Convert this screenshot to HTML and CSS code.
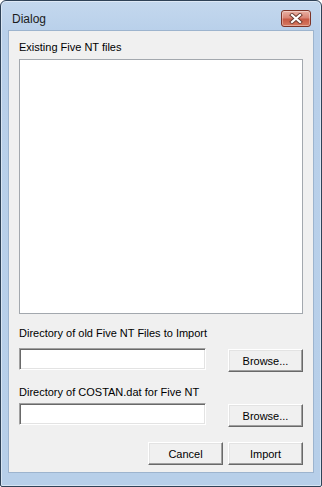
FILE: index.html
```html
<!DOCTYPE html>
<html lang="en">
<head>
    <meta charset="UTF-8">
    <meta name="viewport" content="width=device-width, initial-scale=1.0">
    <title>Dialog</title>
    <link rel="stylesheet" href="styles.css">
</head>
<body>

<div class="window">
    <div class="titlebar">
        <span class="title">Dialog</span>
        <button class="close" title="Close">
            <svg width="14" height="11" viewBox="0 0 14 11">
                <path d="M3 2 L11 9 M11 2 L3 9" stroke="#6b3a30" stroke-width="4" stroke-linecap="square"/>
                <path d="M3 2 L11 9 M11 2 L3 9" stroke="#ffffff" stroke-width="2.2" stroke-linecap="square"/>
            </svg>
        </button>
    </div>

    <div class="client">
        <div class="label label-top">Existing Five NT files</div>
        <div class="listbox" id="file-list"></div>

        <div class="label label-old">Directory of old Five NT Files to Import</div>
        <div class="row">
            <input type="text" class="field" id="old-dir">
            <button class="btn">Browse...</button>
        </div>

        <div class="label label-costan">Directory of COSTAN.dat for Five NT</div>
        <div class="row row-costan">
            <input type="text" class="field" id="costan-dir">
            <button class="btn">Browse...</button>
        </div>

        <div class="actions">
            <button class="btn">Cancel</button>
            <button class="btn">Import</button>
        </div>
    </div>
</div>

</body>
</html>
```

FILE: styles.css
```css
html, body {
    margin: 0;
    padding: 0;
    background-color: #ffffff;
}
.window {
    box-sizing: border-box;
    width: 322px;
    height: 487px;
    border: 1px solid #2f4257;
    border-radius: 6px 6px 2px 2px;
    background: linear-gradient(180deg, #c4d8ee 0, #b9d0ea 30px, #b7cfe9 100%);
    box-shadow: inset 0 0 0 1px rgba(255,255,255,0.45);
    padding-bottom: 13px;
    display: flex;
    flex-direction: column;
    font-family: "Liberation Sans", Arial, sans-serif;
}
.titlebar {
    height: 29px;
    display: flex;
    justify-content: space-between;
    align-items: flex-start;
    padding: 0 10px 0 11px;
}
.title {
    font-size: 12px;
    line-height: 14px;
    color: #1b1b1b;
    margin-top: 11px;
}
.close {
    width: 30px;
    height: 17px;
    margin-top: 9px;
    padding: 0;
    border: 1px solid #7d3428;
    border-radius: 3px;
    background: linear-gradient(180deg, #e9b1a4 0, #d98575 45%, #c75a45 55%, #d67a62 100%);
    box-shadow: inset 0 0 0 1px rgba(255,255,255,0.35);
    display: flex;
    align-items: center;
    justify-content: center;
}
.client {
    flex: 1;
    margin: 0 7px;
    background-color: #f0f0f0;
    border: 1px solid #9db4ce;
    padding: 10px 10px 0 10px;
    display: flex;
    flex-direction: column;
    font-size: 11px;
    line-height: 13px;
    color: #000;
}
.label {
    white-space: nowrap;
}
.listbox {
    height: 253px;
    margin-top: 5px;
    background-color: #ffffff;
    border: 1px solid #a3a8ae;
}
.label-old {
    margin-top: 13px;
}
.row {
    display: flex;
    justify-content: space-between;
    align-items: flex-start;
    margin-top: 8px;
}
.label-costan {
    margin-top: 14px;
}
.row-costan {
    margin-top: 4px;
}
.field {
    box-sizing: border-box;
    width: 187px;
    height: 22px;
    margin: 0;
    padding: 2px 3px;
    background-color: #ffffff;
    border: 1px solid;
    border-color: #a0a0a0 #ffffff #ffffff #a0a0a0;
    box-shadow: inset 1px 1px #696969, inset -1px -1px #e3e3e3;
    font-family: inherit;
    font-size: 11px;
    outline: none;
}
.btn {
    box-sizing: border-box;
    width: 75px;
    height: 23px;
    margin-top: 1px;
    padding: 0;
    background-color: #f0f0f0;
    border: 1px solid;
    border-color: #ffffff #696969 #696969 #ffffff;
    box-shadow: inset -1px -1px #a0a0a0, inset 1px 1px #e3e3e3;
    font-family: inherit;
    font-size: 11px;
    color: #000;
}
.actions {
    display: flex;
    justify-content: flex-end;
    gap: 5px;
    margin-top: 15px;
}
.actions .btn {
    margin-top: 0;
}
```
